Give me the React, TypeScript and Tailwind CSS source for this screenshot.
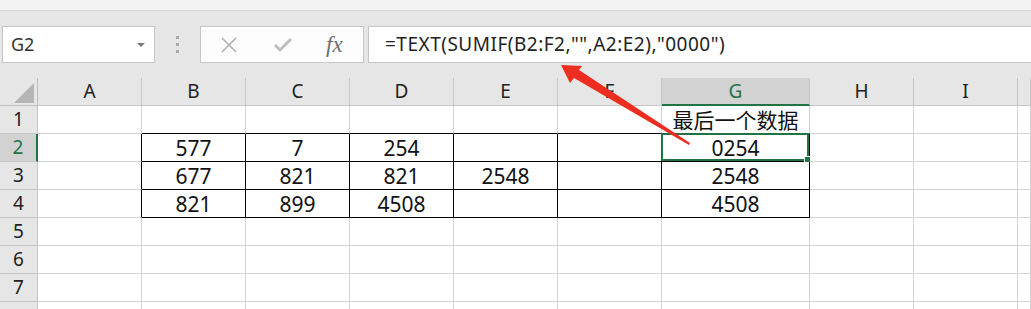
import React from 'react';

const cols = ['A', 'B', 'C', 'D', 'E', 'F', 'G', 'H', 'I', ''];

// cell values by row, columns A..J
const data: Record<number, string[]> = {
  1: ['', '', '', '', '', '', '最后一个数据', '', '', ''],
  2: ['', '577', '7', '254', '', '', '0254', '', '', ''],
  3: ['', '677', '821', '821', '2548', '', '2548', '', '', ''],
  4: ['', '821', '899', '4508', '', '', '4508', '', '', ''],
};

const inBox = (r: number, c: number) => r >= 2 && r <= 4 && c >= 1 && c <= 6;

const cellFont = { fontFamily: '"Noto Sans", "Noto Sans CJK SC", sans-serif' };

const App = () => {
  const rows = [1, 2, 3, 4, 5, 6, 7, 8];
  return (
    <div className="relative w-[1031px] h-[309px] overflow-hidden bg-[#e6e6e6]" style={cellFont}>
      {/* ribbon edge */}
      <div className="h-[11px] bg-[#f3f3f3] border-b border-[#d4d4d4]"></div>

      {/* formula bar */}
      <div className="h-[67px] flex items-center">
        <div className="ml-[2px] w-[153px] h-[37px] bg-white border border-[#c6c6c6] flex items-center justify-between pl-[8px] pr-[9px]">
          <span className="text-[18px] text-[#333]">G2</span>
          <span className="w-0 h-0 border-l-[4px] border-r-[4px] border-t-[4px] border-l-transparent border-r-transparent border-t-[#7a7a7a]"></span>
        </div>
        <div className="w-[45px] flex flex-col items-center gap-[4px]">
          <span className="w-[3px] h-[3px] bg-[#a8a8a8]"></span>
          <span className="w-[3px] h-[3px] bg-[#a8a8a8]"></span>
          <span className="w-[3px] h-[3px] bg-[#a8a8a8]"></span>
        </div>
        <div className="w-[164px] h-[37px] bg-[#fdfdfd] border border-[#c6c6c6] flex items-center">
          <svg width="18" height="18" viewBox="0 0 18 18" className="ml-[19px]">
            <path d="M2 2 L16 16 M16 2 L2 16" stroke="#b0b0b0" strokeWidth="1.6" fill="none" />
          </svg>
          <svg width="20" height="16" viewBox="0 0 20 16" className="ml-[35px]">
            <path d="M2 8 L7 13 L18 2" stroke="#bdbdbd" strokeWidth="3" fill="none" />
          </svg>
          <span
            className="ml-[33px] text-[23px] italic text-[#6e6e6e] leading-none"
            style={{ fontFamily: '"Liberation Serif", serif' }}
          >
            fx
          </span>
        </div>
        <div className="ml-[4px] flex-1 h-[37px] bg-white border border-r-0 border-[#c6c6c6] flex items-center pl-[16px]">
          <span className="text-[19px] tracking-[0.5px] text-[#222]">=TEXT(SUMIF(B2:F2,"",A2:E2),"0000")</span>
        </div>
      </div>

      {/* sheet */}
      <div className="grid grid-cols-[38px_104px_104px_104px_104px_104px_104px_148px_104px_104px_1fr] auto-rows-[28px]">
        <div className="bg-[#e6e6e6] border-r border-b border-[#bfbfbf] relative">
          <svg width="20" height="20" className="absolute right-[3px] bottom-[2px]">
            <polygon points="20,0 20,20 0,20" fill="#b5b5b5" />
          </svg>
        </div>
        {cols.map((c, i) =>
          c === 'G' ? (
            <div key={i} className="bg-[#d2d2d2] border-r border-[#c6c6c6] border-b-2 border-b-[#217346] flex items-center justify-center text-[19px] text-[#217346]">
              {c}
            </div>
          ) : (
            <div key={i} className="bg-[#e6e6e6] border-r border-b border-[#c6c6c6] flex items-center justify-center text-[19px] text-[#222]">
              {c}
            </div>
          )
        )}

        {rows.map((r) => (
          <React.Fragment key={r}>
            {r === 2 ? (
              <div className="bg-[#d2d2d2] border-r-2 border-r-[#217346] border-b border-[#c6c6c6] flex items-center justify-center text-[19px] text-[#217346]">
                {r}
              </div>
            ) : (
              <div className="bg-[#e6e6e6] border-r border-b border-[#c6c6c6] flex items-center justify-center text-[19px] text-[#222]">
                {r < 8 ? r : ''}
              </div>
            )}
            {cols.map((_, c) => {
              const right = inBox(r, c) || inBox(r, c + 1) ? 'border-r-black' : 'border-r-[#d4d4d4]';
              const bottom = inBox(r, c) || inBox(r + 1, c) ? 'border-b-black' : 'border-b-[#d4d4d4]';
              const v = data[r] ? data[r][c] : '';
              return (
                <div
                  key={c}
                  className={`relative bg-white border-r border-b ${right} ${bottom} flex items-end justify-center whitespace-nowrap text-[21px] leading-[24px] text-[#111]`}
                >
                  <span className="pb-[1px]">{v}</span>
                  {r === 2 && c === 6 && (
                    <div className="absolute -left-[1px] -top-[1px] right-0 bottom-0 border-2 border-[#217346]">
                      <span className="absolute -right-[4px] -bottom-[4px] w-[6px] h-[6px] bg-[#217346] outline outline-1 outline-white"></span>
                    </div>
                  )}
                </div>
              );
            })}
          </React.Fragment>
        ))}
      </div>

      {/* red annotation arrow */}
      <svg width="1031" height="309" className="absolute left-0 top-0 pointer-events-none">
        <polygon
          points="561,65 582,66 579,70 690,143 689,145 574,78 570,83"
          fill="#ec2d1f"
        />
      </svg>
    </div>
  );
};

export default App;
